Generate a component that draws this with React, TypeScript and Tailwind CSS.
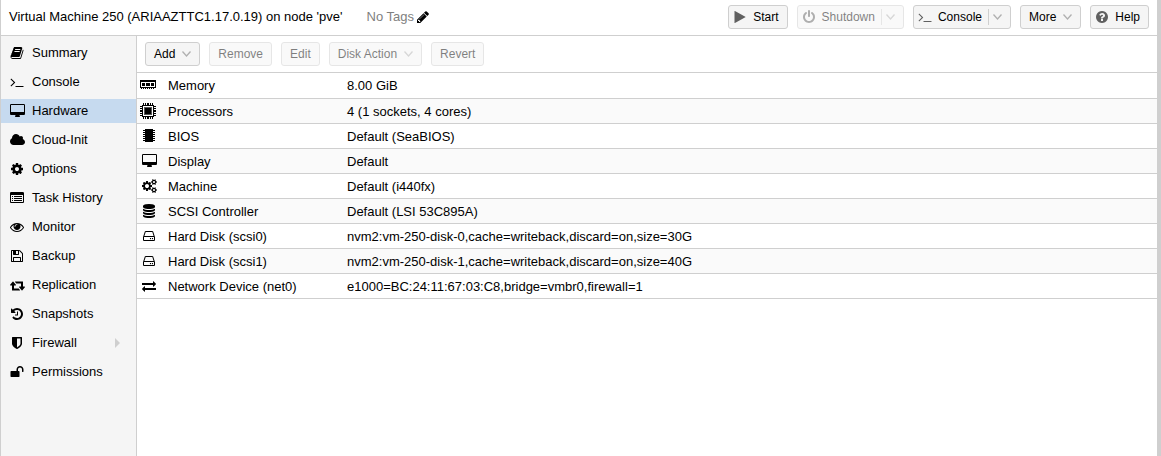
import type { ReactNode } from 'react'

type IconProps = { d: string; viewBox?: string; className?: string }

// Font Awesome 4 glyphs, 1792 units per em
const icons = {
  book: 'M1703 478q40 57 18 129l-275 906q-19 64-76.5 107.5t-122.5 43.5h-923q-77 0-148.5-53.5t-99.5-131.5q-24-67-2-127 0-4 3-27t4-37q1-8-3-21.5t-3-19.5q2-11 8-21t16.5-23.5 16.5-23.5q23-38 45-91.5t30-91.5q3-10 .5-30t-.5-28q3-11 17-28t17-23q21-36 42-92t25-90q1-9-2.5-32t.5-28q4-13 22-30.5t22-22.5q19-26 42.5-84.5t27.5-96.5q1-8-3-25.5t-2-26.5q2-8 9-18t18-23 17-21q8-12 16.5-30.5t15-35 16-36 19.5-32 26.5-23.5 36-11.5 47.5 5.5l-1 3q38-9 51-9h761q74 0 114 56t18 130l-274 906q-36 119-71.5 153.5t-128.5 34.5h-869q-27 0-38 15-11 16-1 43 24 70 144 70h923q29 0 56-15.5t35-41.5l300-987q7-22 5-57 38 15 59 43zm-1064 2q-4 13 2 22.5t20 9.5h608q13 0 25.5-9.5t16.5-22.5l21-64q4-13-2-22.5t-20-9.5h-608q-13 0-25.5 9.5t-16.5 22.5zm-83 256q-4 13 2 22.5t20 9.5h608q13 0 25.5-9.5t16.5-22.5l21-64q4-13-2-22.5t-20-9.5h-608q-13 0-25.5 9.5t-16.5 22.5z',
  terminal:
    'M649 983l-466 466q-10 10-23 10t-23-10l-50-50q-10-10-10-23t10-23l393-393-393-393q-10-10-10-23t10-23l50-50q10-10 23-10t23 10l466 466q10 10 10 23t-10 23zm1079 457v64q0 14-9 23t-23 9h-960q-14 0-23-9t-9-23v-64q0-14 9-23t23-9h960q14 0 23 9t9 23z',
  desktop:
    'M1728 992v-832q0-13-9.5-22.5t-22.5-9.5h-1600q-13 0-22.5 9.5t-9.5 22.5v832q0 13 9.5 22.5t22.5 9.5h1600q13 0 22.5-9.5t9.5-22.5zm128-832v1088q0 66-47 113t-113 47h-544q0 37 16 77.5t32 71 16 43.5q0 26-19 45t-45 19h-512q-26 0-45-19t-19-45q0-14 16-44t32-70 16-78h-544q-66 0-113-47t-47-113v-1088q0-66 47-113t113-47h1600q66 0 113 47t47 113z',
  cloud:
    'M1984 1152q0 159-112.5 271.5t-271.5 112.5h-1088q-185 0-316.5-131.5t-131.5-316.5q0-132 71-241.5t187-163.5q-2-28-2-43 0-212 150-362t362-150q158 0 286.5 88t187.5 230q70-62 166-62 106 0 181 75t75 181q0 75-41 138 129 30 213 134.5t84 239.5z',
  cog: 'M1152 896q0-106-75-181t-181-75-181 75-75 181 75 181 181 75 181-75 75-181zm512-109v222q0 12-8 23t-20 13l-185 28q-19 54-39 91 35 50 107 138 10 12 10 25t-9 23q-27 37-99 108t-94 71q-12 0-26-9l-138-108q-44 23-91 38-16 136-29 186-7 28-36 28h-222q-14 0-24.5-8.5t-11.5-21.5l-28-184q-49-16-90-37l-141 107q-10 9-25 9-14 0-25-11-126-114-165-168-7-10-7-23 0-12 8-23 15-21 51-66.5t54-70.5q-27-50-41-99l-183-27q-13-2-21-12.5t-8-23.5v-222q0-12 8-23t19-13l186-28q14-46 39-92-40-57-107-138-10-12-10-24 0-10 9-23 26-36 98.5-107.5t94.5-71.5q13 0 26 10l138 107q44-23 91-38 16-136 29-186 7-28 36-28h222q14 0 24.5 8.5t11.5 21.5l28 184q49 16 90 37l142-107q9-9 24-9 13 0 25 10 129 119 165 170 7 8 7 22 0 12-8 23-15 21-51 66.5t-54 70.5q26 50 41 98l183 28q13 2 21 12.5t8 23.5z',
  listAlt:
    'M384 1184v64q0 13-9.5 22.5t-22.5 9.5h-64q-13 0-22.5-9.5t-9.5-22.5v-64q0-13 9.5-22.5t22.5-9.5h64q13 0 22.5 9.5t9.5 22.5zm0-256v64q0 13-9.5 22.5t-22.5 9.5h-64q-13 0-22.5-9.5t-9.5-22.5v-64q0-13 9.5-22.5t22.5-9.5h64q13 0 22.5 9.5t9.5 22.5zm0-256v64q0 13-9.5 22.5t-22.5 9.5h-64q-13 0-22.5-9.5t-9.5-22.5v-64q0-13 9.5-22.5t22.5-9.5h64q13 0 22.5 9.5t9.5 22.5zm1152 512v64q0 13-9.5 22.5t-22.5 9.5h-960q-13 0-22.5-9.5t-9.5-22.5v-64q0-13 9.5-22.5t22.5-9.5h960q13 0 22.5 9.5t9.5 22.5zm0-256v64q0 13-9.5 22.5t-22.5 9.5h-960q-13 0-22.5-9.5t-9.5-22.5v-64q0-13 9.5-22.5t22.5-9.5h960q13 0 22.5 9.5t9.5 22.5zm0-256v64q0 13-9.5 22.5t-22.5 9.5h-960q-13 0-22.5-9.5t-9.5-22.5v-64q0-13 9.5-22.5t22.5-9.5h960q13 0 22.5 9.5t9.5 22.5zm128 704v-832q0-13-9.5-22.5t-22.5-9.5h-1472q-13 0-22.5 9.5t-9.5 22.5v832q0 13 9.5 22.5t22.5 9.5h1472q13 0 22.5-9.5t9.5-22.5zm128-1088v1088q0 66-47 113t-113 47h-1472q-66 0-113-47t-47-113v-1088q0-66 47-113t113-47h1472q66 0 113 47t47 113z',
  eye: 'M1664 960q-152-236-381-353 61 104 61 225 0 185-131.5 316.5t-316.5 131.5-316.5-131.5-131.5-316.5q0-121 61-225-229 117-381 353 133 205 333.5 326.5t434.5 121.5 434.5-121.5 333.5-326.5zm-720-384q0-20-14-34t-34-14q-125 0-214.5 89.5t-89.5 214.5q0 20 14 34t34 14 34-14 14-34q0-86 61-147t147-61q20 0 34-14t14-34zm848 384q0 34-20 69-140 230-376.5 368.5t-499.5 138.5-499.5-139-376.5-368q-20-35-20-69t20-69q140-229 376.5-368t499.5-139 499.5 139 376.5 368q20 35 20 69z',
  floppy:
    'M512 1536h768v-384h-768v384zm896 0h128v-896q0-14-10-38.5t-20-34.5l-281-281q-10-10-34-20t-39-10v416q0 40-28 68t-68 28h-576q-40 0-68-28t-28-68v-416h-128v1280h128v-416q0-40 28-68t68-28h832q40 0 68 28t28 68v416zm-384-928v-320q0-13-9.5-22.5t-22.5-9.5h-192q-13 0-22.5 9.5t-9.5 22.5v320q0 13 9.5 22.5t22.5 9.5h192q13 0 22.5-9.5t9.5-22.5zm640 32v928q0 40-28 68t-68 28h-1344q-40 0-68-28t-28-68v-1344q0-40 28-68t68-28h928q40 0 88 20t76 48l280 280q28 28 48 76t20 88z',
  retweet:
    'M1216 1568q0 13-9.5 22.5t-22.5 9.5h-960q-8 0-13.5-2t-9-7-5.5-8-3-11.5-1-11.5v-600h-192q-26 0-45-19t-19-45q0-24 15-41l320-384q19-22 49-22t49 22l320 384q15 17 15 41 0 26-19 45t-45 19h-192v384h576q16 0 25 11l160 192q7 10 7 21zm640-416q0 24-15 41l-320 384q-20 23-49 23t-49-23l-320-384q-15-17-15-41 0-26 19-45t45-19h192v-384h-576q-16 0-25-12l-160-192q-7-9-7-20 0-13 9.5-22.5t22.5-9.5h960q8 0 13.5 2t9 7 5.5 8 3 11.5 1 11.5v600h192q26 0 45 19t19 45z',
  history:
    'M1664 896q0 156-61 298t-164 245-245 164-298 61q-172 0-327-72.5t-264-204.5q-7-10-6.5-22.5t8.5-20.5l137-138q10-9 25-9 16 2 23 12 73 95 179 147t225 52q104 0 198.5-40.5t163.5-109.5 109.5-163.5 40.5-198.5-40.5-198.5-109.5-163.5-163.5-109.5-198.5-40.5q-98 0-188 35.5t-160 101.5l137 138q31 30 14 69-17 40-59 40h-448q-26 0-45-19t-19-45v-448q0-42 40-59 39-17 69 14l130 129q107-101 244.5-156.5t284.5-55.5q156 0 298 61t245 164 164 245 61 298zm-640-288v448q0 14-9 23t-23 9h-320q-14 0-23-9t-9-23v-64q0-14 9-23t23-9h224v-352q0-14 9-23t23-9h64q14 0 23 9t9 23z',
  shield:
    'M1344 960v-640h-448v1137q119-63 213-137 235-184 235-360zm192-768v768q0 86-33.5 170.5t-83 150-118 127.5-126.5 103-121 77.5-89.5 49.5-42.5 20q-12 6-26 6t-26-6q-16-7-42.5-20t-89.5-49.5-121-77.5-126.5-103-118-127.5-83-150-33.5-170.5v-768q0-26 19-45t45-19h1152q26 0 45 19t19 45z',
  unlock:
    'M1728 576v256q0 26-19 45t-45 19h-64q-26 0-45-19t-19-45v-256q0-106-75-181t-181-75-181 75-75 181v192h96q40 0 68 28t28 68v576q0 40-28 68t-68 28h-960q-40 0-68-28t-28-68v-576q0-40 28-68t68-28h672v-192q0-185 131.5-316.5t316.5-131.5 316.5 131.5 131.5 316.5z',
  pencil:
    'M491 1536l91-91-235-235-91 91v107h128v128h107zm523-928q0-22-22-22-10 0-17 7l-542 542q-7 7-7 17 0 22 22 22 10 0 17-7l542-542q7-7 7-17zm-54-192l416 416-832 832h-416v-416zm683 96q0 53-37 90l-166 166-416-416 166-165q36-38 90-38 53 0 91 38l235 234q37 39 37 91z',
  play: 'M1576 927l-1328 738q-23 13-39.5 3t-16.5-36v-1472q0-26 16.5-36t39.5 3l1328 738q23 13 23 31t-23 31z',
  power:
    'M1664 896q0 156-61 298t-164 245-245 164-298 61-298-61-245-164-164-245-61-298q0-182 80.5-343t226.5-270q43-32 95.5-25t83.5 50q32 42 24.5 94.5t-49.5 84.5q-98 74-151.5 181t-53.5 228q0 104 40.5 198.5t109.5 163.5 163.5 109.5 198.5 40.5 198.5-40.5 163.5-109.5 109.5-163.5 40.5-198.5q0-121-53.5-228t-151.5-181q-42-32-49.5-84.5t24.5-94.5q31-43 84-50t95 25q146 109 226.5 270t80.5 343zm-640-768v640q0 52-38 90t-90 38-90-38-38-90v-640q0-52 38-90t90-38 90 38 38 90z',
  question:
    'M1024 1376v-192q0-14-9-23t-23-9h-192q-14 0-23 9t-9 23v192q0 14 9 23t23 9h192q14 0 23-9t9-23zm256-672q0-88-55.5-163t-138.5-116-170-41q-243 0-371 213-15 24 8 42l132 100q7 6 19 6 16 0 25-12 53-68 86-92 34-24 86-24 48 0 85.5 26t37.5 59q0 38-20 61t-68 45q-63 28-115.5 86.5t-52.5 125.5v36q0 14 9 23t23 9h192q14 0 23-9t9-23q0-19 21.5-49.5t54.5-49.5q32-18 49-28.5t46-35 44.5-48 28-60.5 12.5-81zm384 192q0 209-103 385.5t-279.5 279.5-385.5 103-385.5-103-279.5-279.5-103-385.5 103-385.5 279.5-279.5 385.5-103 385.5 103 279.5 279.5 103 385.5z',
  cogs: 'M832 896q0-106-75-181t-181-75-181 75-75 181 75 181 181 75 181-75 75-181zm768 512q0-52-38-90t-90-38-90 38-38 90q0 53 37.5 90.5t90.5 37.5 90.5-37.5 37.5-90.5zm0-1024q0-52-38-90t-90-38-90 38-38 90q0 53 37.5 90.5t90.5 37.5 90.5-37.5 37.5-90.5zm-384 421v185q0 10-7 19.5t-16 10.5l-155 24q-11 35-32 76 34 48 90 115 7 11 7 20 0 12-7 19-23 30-82.5 89.5t-78.5 59.5q-11 0-21-7l-115-90q-37 19-77 31-11 108-23 155-7 24-30 24h-186q-11 0-20-7.5t-10-17.5l-23-153q-34-10-75-31l-118 89q-7 7-20 7-11 0-21-8-144-133-144-160 0-9 7-19 10-14 41-53t47-61q-23-44-35-82l-152-24q-10-1-17-9.5t-7-19.5v-185q0-10 7-19.5t16-10.5l155-24q11-35 32-76-34-48-90-115-7-11-7-20 0-12 7-20 22-30 82-89t79-59q11 0 21 7l115 90q34-18 77-32 11-108 23-154 7-24 30-24h186q11 0 20 7.5t10 17.5l23 153q34 10 75 31l118-89q8-7 20-7 11 0 21 8 144 133 144 160 0 8-7 19-12 16-42 54t-45 60q23 48 34 82l152 23q10 2 17 10.5t7 19.5zm640 533v140q0 16-149 31-12 27-30 52 51 113 51 138 0 4-4 7-122 71-124 71-8 0-46-47t-52-68q-20 2-30 2t-30-2q-14 21-52 68t-46 47q-2 0-124-71-4-3-4-7 0-25 51-138-18-25-30-52-149-15-149-31v-140q0-16 149-31 13-29 30-52-51-113-51-138 0-4 4-7 4-2 35-20t59-34 30-16q8 0 46 46.5t52 67.5q20-2 30-2t30 2q51-71 92-112l6-2q4 0 124 70 4 3 4 7 0 25-51 138 17 23 30 52 149 15 149 31zm0-1024v140q0 16-149 31-12 27-30 52 51 113 51 138 0 4-4 7-122 71-124 71-8 0-46-47t-52-68q-20 2-30 2t-30-2q-14 21-52 68t-46 47q-2 0-124-71-4-3-4-7 0-25 51-138-18-25-30-52-149-15-149-31v-140q0-16 149-31 13-29 30-52-51-113-51-138 0-4 4-7 4-2 35-20t59-34 30-16q8 0 46 46.5t52 67.5q20-2 30-2t30 2q51-71 92-112l6-2q4 0 124 70 4 3 4 7 0 25-51 138 17 23 30 52 149 15 149 31z',
  database:
    'M896 768q237 0 443-43t325-127v170q0 69-103 128t-280 93.5-385 34.5-385-34.5-280-93.5-103-128v-170q119 84 325 127t443 43zm0 768q237 0 443-43t325-127v170q0 69-103 128t-280 93.5-385 34.5-385-34.5-280-93.5-103-128v-170q119 84 325 127t443 43zm0-384q237 0 443-43t325-127v170q0 69-103 128t-280 93.5-385 34.5-385-34.5-280-93.5-103-128v-170q119 84 325 127t443 43zm0-1152q208 0 385 34.5t280 93.5 103 128v128q0 69-103 128t-280 93.5-385 34.5-385-34.5-280-93.5-103-128v-128q0-69 103-128t280-93.5 385-34.5z',
  hdd: 'M1168 1216q0 33-23.5 56.5t-56.5 23.5-56.5-23.5-23.5-56.5 23.5-56.5 56.5-23.5 56.5 23.5 23.5 56.5zm256 0q0 33-23.5 56.5t-56.5 23.5-56.5-23.5-23.5-56.5 23.5-56.5 56.5-23.5 56.5 23.5 23.5 56.5zm112 160v-320q0-13-9.5-22.5t-22.5-9.5h-1216q-13 0-22.5 9.5t-9.5 22.5v320q0 13 9.5 22.5t22.5 9.5h1216q13 0 22.5-9.5t9.5-22.5zm-1230-480h1180l-157-482q-4-13-16-21.5t-26-8.5h-782q-14 0-26 8.5t-16 21.5zm1358 160v320q0 66-47 113t-113 47h-1216q-66 0-113-47t-47-113v-320q0-25 16-75l197-606q17-53 63-86t101-33h782q55 0 101 33t63 86l197 606q16 50 16 75z',
  exchange:
    'M1792 1184v192q0 13-9.5 22.5t-22.5 9.5h-1376v192q0 13-9.5 22.5t-22.5 9.5q-12 0-24-10l-319-320q-9-9-9-22 0-14 9-23l320-320q9-9 23-9 13 0 22.5 9.5t9.5 22.5v192h1376q13 0 22.5 9.5t9.5 22.5zm0-544q0 14-9 23l-320 320q-9 9-23 9-13 0-22.5-9.5t-9.5-22.5v-192h-1376q-13 0-22.5-9.5t-9.5-22.5v-192q0-13 9.5-22.5t22.5-9.5h1376v-192q0-14 9-23t23-9q12 0 24 10l319 319q9 9 9 23z',
}

function Icon({ d, viewBox = '0 0 1792 1792', className = '' }: IconProps) {
  return (
    <svg viewBox={viewBox} fill="currentColor" className={`h-[14px] shrink-0 ${className}`} aria-hidden="true">
      <path d={d} />
    </svg>
  )
}

const wide = '-64 0 1920 1792'

function MemoryIcon() {
  return (
    <svg viewBox="0 0 16 16" shapeRendering="crispEdges" className="mr-[2px] size-4 shrink-0" aria-hidden="true">
      <path d="M0 3h16v8H0z" />
      <path fill="#fff" d="M1 5h14v5H1z" />
      <path d="M2 6h3v3H2zM6 6h4v3H6zM11 6h3v3h-3zM1 11h1v1H1zM3 11h1v1H3zM5 11h1v1H5zM7 11h1v1H7zM9 11h1v1H9zM11 11h1v1h-1zM13 11h1v1h-1z" />
    </svg>
  )
}

function CpuIcon() {
  return (
    <svg viewBox="0 0 16 16" shapeRendering="crispEdges" className="mr-[2px] size-4 shrink-0" aria-hidden="true">
      <path d="M2 2h12v12H2zM3 0h1v2H3zM5 0h1v2H5zM7 0h2v2H7zM10 0h1v2h-1zM12 0h1v2h-1zM3 14h1v2H3zM5 14h1v2H5zM7 14h2v2H7zM10 14h1v2h-1zM12 14h1v2h-1zM0 3h2v1H0zM0 5h2v1H0zM0 7h2v2H0zM0 10h2v1H0zM0 12h2v1H0zM14 3h2v1h-2zM14 5h2v1h-2zM14 7h2v2h-2zM14 10h2v1h-2zM14 12h2v1h-2z" />
      <path fill="#fff" d="M3 3h10v10H3z" />
      <path fill="#555" d="M4 4h8v8H4z" />
      <path d="M5 5h6v6H5z" />
    </svg>
  )
}

function ChipIcon() {
  return (
    <svg viewBox="0 0 14 14" className="size-[14px] shrink-0" aria-hidden="true">
      <path d="M3 0h8v13H3z" />
      <path d="M1 1h2v1H1zM1 3h2v1H1zM1 5h2v1H1zM1 7h2v1H1zM1 9h2v1H1zM1 11h2v1H1zM11 1h2v1h-2zM11 3h2v1h-2zM11 5h2v1h-2zM11 7h2v1h-2zM11 9h2v1h-2zM11 11h2v1h-2z" />
    </svg>
  )
}

function Chevron() {
  return (
    <svg viewBox="0 0 9 6" className="h-[6px] w-[9px] shrink-0" aria-hidden="true">
      <path d="M0.5 0.5l4 4.5 4-4.5" fill="none" stroke="#b0b0b0" strokeWidth="1.3" />
    </svg>
  )
}

type ButtonProps = {
  children: ReactNode
  icon?: string
  menu?: boolean
  split?: boolean
  disabled?: boolean
}

function ToolButton({ children, icon, menu, split, disabled }: ButtonProps) {
  return (
    <button
      type="button"
      disabled={disabled}
      className="flex h-6 items-center whitespace-nowrap rounded-[3px] border border-[#cfcfcf] bg-[#f5f5f5] px-2 text-xs text-black disabled:opacity-50"
    >
      {icon && <Icon d={icon} className="-ml-1 mr-[6px] text-[#606060]" />}
      {children}
      {split && <span className="ml-[6px] h-4 border-l border-[#cfcfcf]" />}
      {(menu || split) && (
        <span className={split ? 'ml-1' : 'ml-[7px]'}>
          <Chevron />
        </span>
      )}
    </button>
  )
}

const navItems = [
  { label: 'Summary', icon: <Icon d={icons.book} /> },
  { label: 'Console', icon: <Icon d={icons.terminal} /> },
  { label: 'Hardware', icon: <Icon d={icons.desktop} viewBox={wide} />, active: true },
  { label: 'Cloud-Init', icon: <Icon d={icons.cloud} viewBox="64 0 1920 1792" /> },
  { label: 'Options', icon: <Icon d={icons.cog} /> },
  { label: 'Task History', icon: <Icon d={icons.listAlt} /> },
  { label: 'Monitor', icon: <Icon d={icons.eye} /> },
  { label: 'Backup', icon: <Icon d={icons.floppy} /> },
  { label: 'Replication', icon: <Icon d={icons.retweet} viewBox={wide} /> },
  { label: 'Snapshots', icon: <Icon d={icons.history} /> },
  { label: 'Firewall', icon: <Icon d={icons.shield} />, expandable: true },
  { label: 'Permissions', icon: <Icon d={icons.unlock} /> },
]

const hardware = [
  { name: 'Memory', value: '8.00 GiB', icon: <MemoryIcon /> },
  { name: 'Processors', value: '4 (1 sockets, 4 cores)', icon: <CpuIcon /> },
  { name: 'BIOS', value: 'Default (SeaBIOS)', icon: <ChipIcon /> },
  { name: 'Display', value: 'Default', icon: <Icon d={icons.desktop} viewBox={wide} /> },
  { name: 'Machine', value: 'Default (i440fx)', icon: <Icon d={icons.cogs} viewBox={wide} /> },
  { name: 'SCSI Controller', value: 'Default (LSI 53C895A)', icon: <Icon d={icons.database} /> },
  {
    name: 'Hard Disk (scsi0)',
    value: 'nvm2:vm-250-disk-0,cache=writeback,discard=on,size=30G',
    icon: <Icon d={icons.hdd} />,
  },
  {
    name: 'Hard Disk (scsi1)',
    value: 'nvm2:vm-250-disk-1,cache=writeback,discard=on,size=40G',
    icon: <Icon d={icons.hdd} />,
  },
  {
    name: 'Network Device (net0)',
    value: 'e1000=BC:24:11:67:03:C8,bridge=vmbr0,firewall=1',
    icon: <Icon d={icons.exchange} />,
  },
]

function Header() {
  return (
    <header className="flex h-9 items-center border-b border-[#cfcfcf] px-2 pb-px">
      <h1 className="whitespace-nowrap">Virtual Machine 250 (ARIAAZTTC1.17.0.19) on node 'pve'</h1>
      <div className="ml-6 flex items-center gap-[2px] text-[#808080]">
        No Tags
        <button type="button" aria-label="Edit Tags" className="text-black">
          <Icon d={icons.pencil} />
        </button>
      </div>
      <div className="ml-auto flex gap-[9px]">
        <ToolButton icon={icons.play}>Start</ToolButton>
        <ToolButton icon={icons.power} split disabled>
          Shutdown
        </ToolButton>
        <ToolButton icon={icons.terminal} split>
          Console
        </ToolButton>
        <ToolButton menu>More</ToolButton>
        <ToolButton icon={icons.question}>Help</ToolButton>
      </div>
    </header>
  )
}

function Sidebar() {
  return (
    <nav className="w-[136px] shrink-0 border-r border-[#cfcfcf] bg-[#f5f5f5] pt-[5px]">
      <ul>
        {navItems.map((item) => (
          <li key={item.label} className="pb-[5px]">
            <a
              href="#"
              className={`flex h-6 items-center pl-2 pr-4 ${item.active ? 'bg-[#c6daef]' : ''}`}
            >
              <span className="mr-[7px] flex w-4 justify-center">{item.icon}</span>
              {item.label}
              {item.expandable && (
                <svg viewBox="0 0 5 10" className="ml-auto h-[10px] w-[5px]" fill="#cfcfcf" aria-hidden="true">
                  <path d="M0 0l5 5-5 5z" />
                </svg>
              )}
            </a>
          </li>
        ))}
      </ul>
    </nav>
  )
}

export default function App() {
  return (
    <div className="flex min-h-screen flex-col border-l border-r-4 border-l-[#cfcfcf] border-r-[#cfcfcf] bg-white font-['Liberation_Sans',Arial,sans-serif] text-[13px] leading-4 text-black">
      <Header />
      <div className="flex grow">
        <Sidebar />
        <main className="min-w-0 grow">
          <div className="flex h-[37px] items-center gap-[9px] border-b border-[#cfcfcf] px-2">
            <ToolButton menu>Add</ToolButton>
            <ToolButton disabled>Remove</ToolButton>
            <ToolButton disabled>Edit</ToolButton>
            <ToolButton menu disabled>
              Disk Action
            </ToolButton>
            <ToolButton disabled>Revert</ToolButton>
          </div>
          <table className="w-full table-fixed border-collapse">
            <tbody>
              {hardware.map((row) => (
                <tr key={row.name} className="h-[25px] border-b border-[#cfcfcf] even:bg-[#fafafa]">
                  <th scope="row" className="w-[200px] p-0 pt-[2px] text-left font-normal">
                    <div className="flex items-center pl-[3px]">
                      <span className="mr-[10px] flex h-4 w-[18px] items-center justify-center pb-[2px]">
                        {row.icon}
                      </span>
                      {row.name}
                    </div>
                  </th>
                  <td className="p-0 pl-[10px] pt-[2px]">{row.value}</td>
                </tr>
              ))}
            </tbody>
          </table>
        </main>
      </div>
    </div>
  )
}
